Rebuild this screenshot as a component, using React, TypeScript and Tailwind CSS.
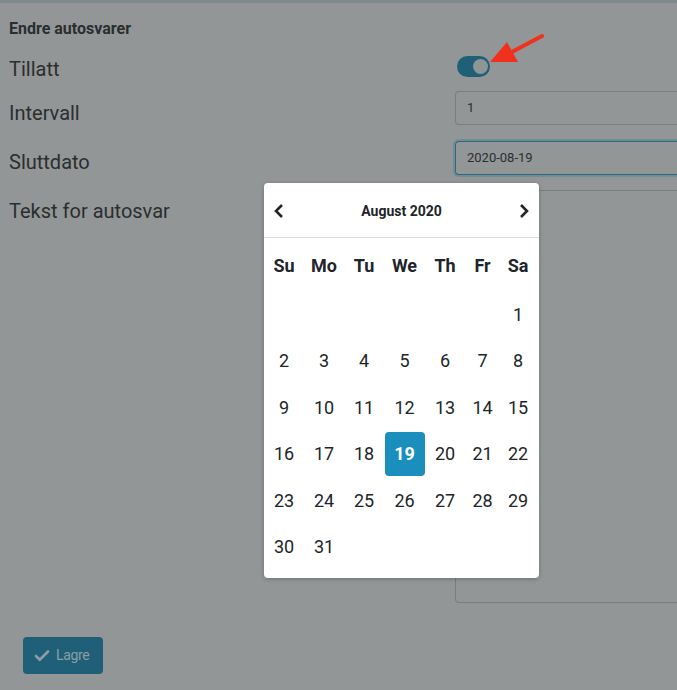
import { Check } from "lucide-react";

export default function App() {
  const weeks: (number | null)[][] = [
    [null, null, null, null, null, null, 1],
    [2, 3, 4, 5, 6, 7, 8],
    [9, 10, 11, 12, 13, 14, 15],
    [16, 17, 18, 19, 20, 21, 22],
    [23, 24, 25, 26, 27, 28, 29],
    [30, 31, null, null, null, null, null],
  ];
  const days = ["Su", "Mo", "Tu", "We", "Th", "Fr", "Sa"];

  return (
    <div className="relative h-[690px] w-[677px] overflow-hidden bg-[#939696] font-['Roboto',sans-serif] text-[#2a2e30]">
      <div className="h-[3px] bg-[#7d898c]" />
      <div className="pl-[9px] pt-[16px]">
        <h2 className="text-[16px] font-bold leading-[20px]">Endre autosvarer</h2>
      </div>

      <div className="grid grid-cols-[455px_1fr] text-[20px] leading-[24px]">
        <div className="h-[52px] pl-[9px] pt-[18px]">Tillatt</div>
        <div className="h-[52px] pl-[2px] pt-[17px]">
          <div className="flex h-[21px] w-[33px] items-center justify-end rounded-full bg-[#1f5f78] pr-[2px]">
            <div className="h-[15px] w-[15px] rounded-full bg-[#8e9596]" />
          </div>
        </div>

        <div className="h-[34px] pl-[9px] pt-[10px]">Intervall</div>
        <div className="flex h-[34px] items-center rounded-l-[4px] border border-r-0 border-[#7b7e7e] pl-[11px] text-[13px]">1</div>

        <div className="mt-[16px] h-[34px] pl-[9px] pt-[9px]">Sluttdato</div>
        <div className="mt-[16px] flex h-[34px] items-center rounded-l-[4px] border border-r-0 border-[#2b6a80] pl-[11px] text-[13px] shadow-[0_0_0_2px_rgba(60,120,140,0.35)]">2020-08-19</div>

        <div className="mt-[15px] pl-[9px] pt-[9px]">Tekst for autosvar</div>
        <div className="mt-[15px] h-[413px] rounded-l-[4px] border border-r-0 border-[#7b7e7e]" />
      </div>

      <div className="pl-[23px] pt-[34px]">
        <button className="flex h-[37px] w-[80px] items-center gap-[5px] rounded-[4px] bg-[#1f5f78] pl-[10px] text-[14px] tracking-tight text-[#8b9ea5]">
          <Check className="h-[18px] w-[18px]" strokeWidth={3.5} />
          Lagre
        </button>
      </div>

      <div className="absolute left-[264px] top-[183px] w-[275px] rounded-[4px] bg-white text-[#212529] shadow-[0_1px_4px_rgba(0,0,0,0.25)]">
        <div className="flex h-[55px] items-center justify-between border-b border-[#d6d8da] px-[10px] pt-[2px]">
          <svg width="12" height="16" viewBox="0 0 12 16" className="ml-[-1px]">
            <path d="M9 2 L3 8 L9 14" fill="none" stroke="#212529" strokeWidth="2.6" />
          </svg>
          <span className="text-[14px] font-bold">August 2020</span>
          <svg width="12" height="16" viewBox="0 0 12 16" className="mr-[-1px]">
            <path d="M3 2 L9 8 L3 14" fill="none" stroke="#212529" strokeWidth="2.6" />
          </svg>
        </div>
        <div className="grid grid-cols-[40px_40px_40px_41px_40px_35px_36px] pb-[8px] text-[18px]">
          {days.map((d) => (
            <div key={d} className="flex h-[53px] items-center justify-center pt-[1px] font-bold">
              {d}
            </div>
          ))}
          {weeks.flat().map((n, i) => (
            <div key={i} className="flex h-[46.5px] items-center justify-center">
              {n === 19 ? (
                <div className="flex h-[44px] w-[40px] items-center justify-center rounded-[4px] bg-[#1a8fbd] font-bold text-white">
                  19
                </div>
              ) : (
                n
              )}
            </div>
          ))}
        </div>
      </div>

      <svg className="absolute left-[480px] top-[30px]" width="70" height="40" viewBox="0 0 70 40">
        <path d="M62 6 L30 23" stroke="#f0321d" strokeWidth="4" strokeLinecap="round" />
        <path d="M10 32 L27 12 L38 32 Z" fill="#f0321d" />
      </svg>
    </div>
  );
}
